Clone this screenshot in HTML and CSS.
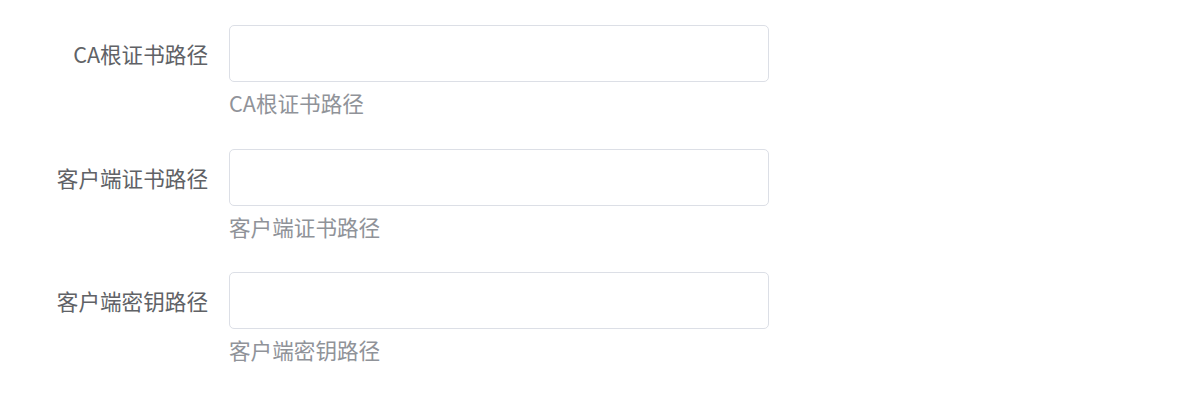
FILE: index.html
```html
<!DOCTYPE html>
<html lang="zh">
<head>
<meta charset="utf-8">
<link rel="stylesheet" href="styles.css">
</head>
<body>
<form class="form">
  <div class="row">
    <label class="label">CA根证书路径</label>
    <div class="field">
      <input class="input" type="text">
      <div class="help">CA根证书路径</div>
    </div>
  </div>
  <div class="row">
    <label class="label">客户端证书路径</label>
    <div class="field">
      <input class="input" type="text">
      <div class="help">客户端证书路径</div>
    </div>
  </div>
  <div class="row">
    <label class="label">客户端密钥路径</label>
    <div class="field">
      <input class="input" type="text">
      <div class="help">客户端密钥路径</div>
    </div>
  </div>
</form>
</body>
</html>
```
FILE: styles.css
```css
html, body {
  margin: 0;
  padding: 0;
  background: #ffffff;
}
body {
  font-family: "Noto Sans CJK SC", "Noto Sans", sans-serif;
  font-size: 21.6px;
}
.form {
  padding-top: 25px;
  display: flex;
  flex-direction: column;
  gap: 29.5px;
}
.row {
  display: flex;
  align-items: flex-start;
}
.label {
  width: 229px;
  padding-right: 21px;
  box-sizing: border-box;
  text-align: right;
  color: #606266;
  height: 57px;
  line-height: 57px;
  white-space: nowrap;
  flex: none;
}
.field {
  display: flex;
  flex-direction: column;
}
.input {
  width: 540px;
  height: 57px;
  box-sizing: border-box;
  border: 1px solid #dcdfe6;
  border-radius: 5px;
  background: #fff;
  margin: 0;
  padding: 0 15px;
  font: inherit;
  outline: none;
}
.help {
  margin-top: 5px;
  line-height: 32px;
  color: #909399;
  white-space: nowrap;
}
```
